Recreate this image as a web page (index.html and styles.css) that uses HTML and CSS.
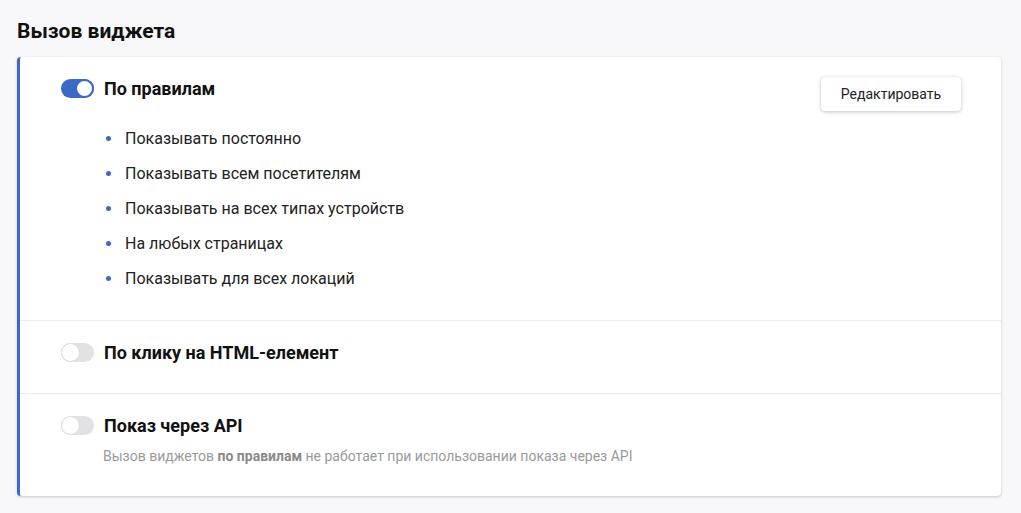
FILE: index.html
```html
<!DOCTYPE html>
<html lang="ru">
<head>
<meta charset="utf-8">
<title>Вызов виджета</title>
<link rel="stylesheet" href="styles.css">
</head>
<body>
<div class="page">
  <h2 class="title">Вызов виджета</h2>
  <div class="card">
    <section class="section section-rules">
      <div class="section-head">
        <span class="toggle toggle-on"><span class="knob"></span></span>
        <span class="label">По правилам</span>
        <button class="btn">Редактировать</button>
      </div>
      <ul class="rules">
        <li>Показывать постоянно</li>
        <li>Показывать всем посетителям</li>
        <li>Показывать на всех типах устройств</li>
        <li>На любых страницах</li>
        <li>Показывать для всех локаций</li>
      </ul>
    </section>
    <section class="section section-click">
      <div class="section-head">
        <span class="toggle"><span class="knob"></span></span>
        <span class="label">По клику на HTML-елемент</span>
      </div>
    </section>
    <section class="section section-api">
      <div class="section-head">
        <span class="toggle"><span class="knob"></span></span>
        <span class="label">Показ через API</span>
      </div>
      <p class="note">Вызов виджетов <b>по правилам</b> не работает при использовании показа через API</p>
    </section>
  </div>
</div>
</body>
</html>
```

FILE: styles.css
```css
* { box-sizing: border-box; }
html, body {
  margin: 0;
  padding: 0;
  background: #f8f7f9;
  font-family: Roboto, "Liberation Sans", Arial, sans-serif;
  color: #111;
}
.page {
  padding: 19px 20px 17px 17px;
}
.title {
  margin: 0 0 13px 0;
  font-size: 21px;
  line-height: 25px;
  font-weight: 700;
  color: #111;
}
.card {
  background: #fff;
  border-left: 3px solid #3c69c3;
  border-radius: 4px;
  box-shadow: 0 1px 3px rgba(0,0,0,0.18), 0 0 1px rgba(0,0,0,0.10);
}
.section {
  padding: 19px 40px 0 41px;
  border-top: 1px solid #ececec;
}
.section:first-child { border-top: none; }
.section-rules { padding-bottom: 24px; }
.section-click { padding-bottom: 29px; }
.section-api { padding-bottom: 30px; }
.section-head {
  display: flex;
  align-items: center;
  height: 24px;
  gap: 10px;
}
.label {
  font-size: 18px;
  font-weight: 700;
  color: #111;
}
.btn {
  margin-left: auto;
  align-self: flex-start;
  width: 140px;
  height: 34px;
  margin-top: 1px;
  border: none;
  border-radius: 4px;
  background: #fff;
  box-shadow: 0 1px 4px rgba(0,0,0,0.22), 0 0 1px rgba(0,0,0,0.15);
  font-family: Roboto, "Liberation Sans", Arial, sans-serif;
  font-size: 14px;
  color: #222;
}
.toggle {
  position: relative;
  display: inline-block;
  width: 33px;
  height: 19px;
  border-radius: 10px;
  background: #e2e1e4;
  flex: none;
}
.toggle .knob {
  position: absolute;
  left: 0;
  top: 0;
  width: 19px;
  height: 19px;
  border-radius: 50%;
  background: #fff;
  border: 1px solid #dcdcdc;
}
.toggle-on { background: #3c69c3; }
.toggle-on .knob {
  left: 14px;
  border: 2px solid #3c69c3;
}
.rules {
  list-style: none;
  margin: 21px 0 0 0;
  padding: 0 0 0 43px;
}
.rules li {
  position: relative;
  height: 35px;
  line-height: 35px;
  padding-left: 21px;
  font-size: 16px;
  color: #222;
}
.rules li::before {
  content: "";
  position: absolute;
  left: 2px;
  top: 15px;
  width: 5px;
  height: 5px;
  border-radius: 50%;
  background: #3c69c3;
}
.note {
  margin: 9px 0 0 42px;
  font-size: 14px;
  line-height: 20px;
  color: #9a9a9a;
}
.note b { color: #8a8a8a; font-weight: 700; }
```
